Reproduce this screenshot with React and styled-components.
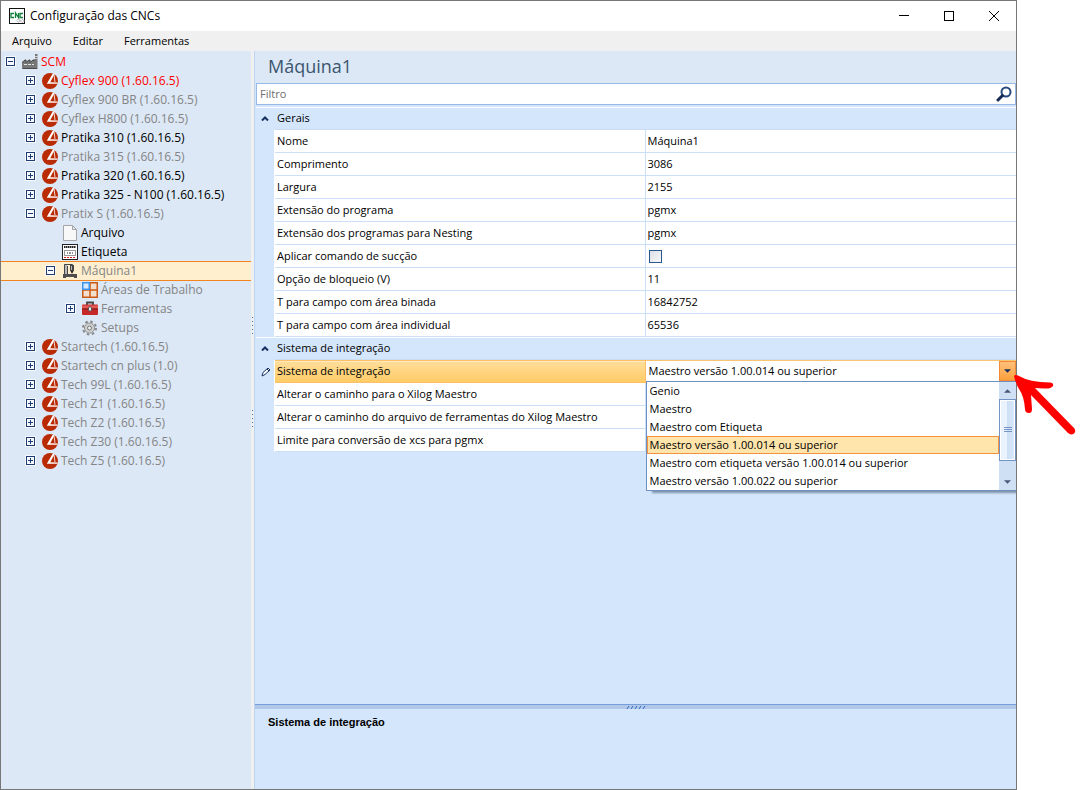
import React from "react";
import styled, { createGlobalStyle, css } from "styled-components";

const GlobalStyle = createGlobalStyle`
  * {
    box-sizing: border-box;
  }

  body {
    margin: 0;
    background: #fff;
    color: #000;
    font-family: "Open Sans", "Noto Sans", sans-serif;
    font-size: 12px;
  }

  button,
  input,
  select {
    margin: 0;
    padding: 0;
    border: 0;
    border-radius: 0;
    background: none;
    font: inherit;
    color: inherit;
  }
`;

const Desktop = styled.div`
  display: flex;
  min-height: 100vh;
  padding-right: 71px;
`;

const Window = styled.main`
  display: flex;
  flex: 1;
  flex-direction: column;
  min-width: 0;
  border: 1px solid #777;
`;

const TitleBar = styled.header`
  display: flex;
  align-items: center;
  height: 30px;
  padding-left: 8px;
`;

const WindowTitle = styled.h1`
  flex: 1;
  margin: 0 0 0 4px;
  font-size: 12px;
  font-weight: 400;
  line-height: 30px;
`;

const WindowButton = styled.button`
  display: flex;
  align-items: center;
  justify-content: center;
  width: 45px;
  height: 30px;
`;

const MenuBar = styled.nav`
  display: flex;
  gap: 21px;
  height: 20px;
  padding-left: 11px;
  background: #f0f0f0;
  font-size: 11px;
  line-height: 20px;
`;

const MenuItem = styled.button`
  line-height: 20px;
`;

const Body = styled.div`
  display: flex;
  flex: 1;
`;

const Sidebar = styled.nav`
  width: 250px;
  background: #dce8f6;
`;

const Tree = styled.ul`
  margin: 0;
  padding: 1px 0 0;
  list-style: none;
`;

const TreeRow = styled.li`
  display: flex;
  align-items: center;
  height: 19px;
  padding-left: ${({ $level }) => 4 + $level * 20}px;
  color: ${({ $color }) => $color || "#858585"};
  white-space: nowrap;

  ${({ $selected }) =>
    $selected &&
    css`
      background: #ffefcf;
      box-shadow: inset 0 1px #f5841f, 0 1px #f5841f;
    `}
`;

const Toggle = styled.button`
  display: flex;
  width: 11px;
  height: 11px;
`;

const ToggleSpace = styled.span`
  width: 11px;
`;

const TreeIcon = styled.span`
  display: flex;
  width: 16px;
  height: 16px;
  margin: 0 3px 0 6px;
`;

const SideSplitter = styled.div`
  display: flex;
  flex-direction: column;
  align-items: center;
  gap: 76px;
  width: 3px;
  padding-top: 266px;
  background: #f0f0f0;
`;

const SideGrip = styled.span`
  width: 1px;
  height: 17px;
  background: repeating-linear-gradient(#3d6fc4 0 1px, transparent 1px 4px);
`;

const Content = styled.section`
  display: flex;
  flex: 1;
  flex-direction: column;
  min-width: 0;
  border-left: 1px solid #bcd5f5;
  background: #d4e6fc;
`;

const ContentTitle = styled.h2`
  height: 32px;
  margin: 0;
  padding-left: 13px;
  background: #dce8f6;
  color: #3b566e;
  font-size: 18px;
  font-weight: 400;
  line-height: 30px;
`;

const FilterBox = styled.div`
  display: flex;
  height: 22px;
  margin: 0 0 2px 1px;
  border: 1px solid #98b8e6;
  background: #fff;
`;

const FilterInput = styled.input`
  flex: 1;
  padding: 0 0 2px 3px;
  font-size: 11px;
  outline: none;

  &::placeholder {
    color: #6d6d6d;
    opacity: 1;
  }
`;

const SearchButton = styled.button`
  display: flex;
  align-items: center;
  justify-content: center;
  width: 22px;
`;

const GridArea = styled.div`
  flex: 1;
  padding-left: 1px;
`;

const PropertyTable = styled.table`
  width: 100%;
  table-layout: fixed;
  border-collapse: separate;
  border-spacing: 0;
  font-size: 11px;
`;

const GutterCol = styled.col`
  width: 19px;
`;

const GroupCell = styled.th`
  height: 23px;
  padding: 0 0 2px 2px;
  border-top: 1px solid #fff;
  border-bottom: 1px solid #c9dcf3;
  font-weight: 400;
  line-height: 18px;
  text-align: left;
`;

const GutterCell = styled.td`
  height: 23px;
  padding: 0 0 ${({ $group }) => ($group ? "2px" : "0")} 5px;
  border-right: 1px solid ${({ $group }) => ($group ? "transparent" : "#fff")};
  border-top: ${({ $group }) => ($group ? "1px solid #fff" : "0")};
  line-height: 0;
`;

const NameCell = styled.th`
  height: 23px;
  padding: 0 0 0 2px;
  border-right: 1px solid #cbdff6;
  border-bottom: 1px solid #cbdff6;
  background: #fff;
  font-weight: 400;
  line-height: 20px;
  text-align: left;
  white-space: nowrap;

  ${({ $active }) =>
    $active &&
    css`
      border-color: #f9c067;
      box-shadow: inset 0 1px #f9c067, inset 0 2px #ffe9bd;
      background: linear-gradient(#ffdf9e, #ffcb65);
    `}
`;

const ValueCell = styled.td`
  position: relative;
  height: 23px;
  padding: ${({ $active }) => ($active ? "0" : "0 0 0 2px")};
  border-bottom: 1px solid #cbdff6;
  background: #fff;
  line-height: 20px;
`;

const CheckBox = styled.input`
  display: block;
  width: 13px;
  height: 13px;
  margin-left: 1px;
  appearance: none;
  border: 1px solid #2a5690;
  background: linear-gradient(135deg, #dcdfe6, #f8f8f8);
`;

const Combo = styled.div`
  display: flex;
  height: 22px;
  border-top: 1px solid #fbc471;
  border-bottom: 1px solid #84a7dc;
  background: #fff;
`;

const ComboSelect = styled.select`
  flex: 1;
  min-width: 0;
  padding-left: 3px;
  appearance: none;
  outline: none;
`;

const ComboButton = styled.button`
  display: flex;
  align-items: center;
  justify-content: center;
  width: 17px;
  border: 1px solid #f58a36;
  background: linear-gradient(#ffc07a, #fba03c);
`;

const Popup = styled.div`
  position: absolute;
  top: 21px;
  right: 0;
  left: 0;
  z-index: 1;
  display: flex;
  border: 1px solid #6f91c2;
  border-right: 0;
  background: #fff;
  box-shadow: 5px 3px 2px -1px #8091a8;
  clip-path: inset(0 0 -5px 0);
`;

const OptionList = styled.ul`
  flex: 1;
  margin: 0;
  padding: 0;
  list-style: none;
`;

const Option = styled.li`
  height: 18px;
  padding-left: 2px;
  border: 1px solid ${({ $current }) => ($current ? "#f5923e" : "transparent")};
  background: ${({ $current }) => ($current ? "#ffe5ab" : "transparent")};
  line-height: 16px;
  white-space: nowrap;
`;

const ScrollBar = styled.div`
  display: flex;
  flex-direction: column;
  width: 17px;
  background: #cfdff4;
`;

const ScrollButton = styled.button`
  display: flex;
  align-items: center;
  justify-content: center;
  height: 17px;
`;

const ScrollThumb = styled.div`
  display: flex;
  align-items: center;
  justify-content: center;
  height: 62px;
  margin-bottom: 12px;
  border: 1px solid #7293c4;
  background: linear-gradient(90deg, #e9f2fd 45%, #cbdef5 45%, #dce9fa);
  box-shadow: inset 0 0 0 1px #fff;
`;

const Pointer = styled.svg`
  position: absolute;
  top: 11px;
  right: -61px;
  z-index: 2;
  pointer-events: none;
`;

const BottomSplitter = styled.div`
  display: flex;
  align-items: center;
  justify-content: center;
  height: 5px;
  border-top: 1px solid #759edb;
  background: #b1c8e9;
`;

const Description = styled.div`
  height: 80px;
  padding: 4px 13px;
  font-family: "Liberation Sans", sans-serif;
  font-size: 11px;
  font-weight: 700;
  line-height: 18px;
`;

function CncIcon() {
  return (
    <svg width="17" height="17" viewBox="0 0 17 17" aria-hidden="true">
      <rect x=".5" y=".5" width="15" height="15" fill="#fff" stroke="#111" />
      <g fill="none" stroke="#15803d" strokeWidth="1.300">
        <path d="M5 5.500H2v4h3" />
        <path d="M6.500 10V5L9.500 9.500V5" />
        <path d="M14 5.500h-3v4h3" />
      </g>
      <g fill="none" stroke="#999">
        <circle cx="9.500" cy="12.500" r="1.500" strokeDasharray="1 .5" />
        <circle cx="13.500" cy="13" r="1.500" strokeDasharray="1 .5" />
      </g>
    </svg>
  );
}

function ToggleIcon({ open }) {
  return (
    <svg width="11" height="11" viewBox="0 0 11 11" aria-hidden="true">
      <rect x="0" y="0" width="11" height="11" rx="1" fill="#fff" opacity=".8" />
      <rect x="1.500" y="1.500" width="8" height="8" fill="#f7faff" stroke="#1f3d72" />
      <path d={open ? "M3 5.500h5" : "M3 5.500h5M5.500 3v5"} stroke="#1f3d72" />
    </svg>
  );
}

const icons = {
  factory: (
    <>
      <path d="M0 15V8.500L3 6h1v2.500L7 6h1v2.500L11 6h2V0h2.500v15z" fill="#777" />
      <path d="M0 8.500L3 6h1v2.500L7 6h1v2.500L11 6h2" fill="none" stroke="#444" />
      <path d="M2 10.500h3M6 10.500h3M10 10.500h2" stroke="#e4e4e4" />
      <path d="M1 14.500h14" stroke="#4a4a4a" />
      <path d="M13 2.500h3M13 4.500h3" stroke="#ccc" />
    </>
  ),
  scm: (
    <>
      <circle cx="8" cy="8" r="8" fill="#b92b05" />
      <path d="M12.500 0L10.500 1 4.800 10.800H15.500V9.500L8.200 9.200 11.600 3z" fill="#fff" />
      <path d="M12 1.500l1 7.500" fill="none" stroke="#fff" strokeWidth=".8" />
    </>
  ),
  file: (
    <path d="M1.500.5h9l4 4v11h-13zM10.500.5v4h4" fill="#f8f8f8" stroke="#a5a5a5" />
  ),
  label: (
    <>
      <rect x=".5" y=".5" width="15" height="15" fill="#fff" stroke="#222" />
      <path d="M2 3h12" stroke="#222" strokeWidth="2" strokeDasharray="1 .5 2 .5" />
      <rect x="2.500" y="6.500" width="11" height="5" fill="#fff" stroke="#333" strokeDasharray="1 1" />
      <path d="M5 9h1M7 9h2M10 9h1" stroke="#222" />
      <path d="M2 13.500h12" stroke="#c22" strokeDasharray="2 1" />
    </>
  ),
  machine: (
    <>
      <path d="M2 11V1h3v10z" fill="#b8b8b8" />
      <path d="M2.500 11V1.500h8V8M5.500 11V3" fill="none" stroke="#454545" />
      <path d="M8 2h4v6H8z" fill="#454545" />
      <path d="M9 3h1v4H9z" fill="#b8b8b8" />
      <path d="M1 11h14v4h-3v-1H4v1H1z" fill="#4e4e4e" />
      <path d="M8.500 8L10 11l1.500-3z" fill="#222" />
    </>
  ),
  areas: (
    <>
      <rect x=".75" y=".75" width="14.500" height="14.500" fill="#f7ddcb" stroke="#c85a16" strokeWidth="1.500" />
      <path d="M8 1v14M1 8h14" stroke="#c85a16" strokeWidth="1.500" />
      <rect x=".75" y=".75" width="6.500" height="6.500" fill="#d8e9fb" stroke="#3e95ee" strokeWidth="1.500" />
    </>
  ),
  toolbox: (
    <>
      <path d="M5 4V1.500h6V4" fill="none" stroke="#454545" strokeWidth="1.800" />
      <rect x="0" y="3.500" width="16" height="10.500" rx="1" fill="#c62828" />
      <path d="M0 4.500h16v3H0z" fill="#e35a55" />
      <path d="M0 8h16" stroke="#7d1414" />
      <rect x="6.500" y="6" width="3" height="4" rx="1" fill="#eee" stroke="#555" />
    </>
  ),
  gear: (
    <>
      <circle cx="7.500" cy="8" r="6.500" fill="none" stroke="#888" strokeWidth="2" strokeDasharray="2.500 2.600" />
      <circle cx="7.500" cy="8" r="5" fill="#d0d0d0" stroke="#909090" />
      <circle cx="7.500" cy="8" r="2" fill="#eee" stroke="#777" />
    </>
  )
};

const treeItems = [
  { name: "SCM", level: 0, icon: "factory", color: "#f00", open: true },
  { name: "Cyflex 900 (1.60.16.5)", level: 1, icon: "scm", color: "#f00", open: false },
  { name: "Cyflex 900 BR (1.60.16.5)", level: 1, icon: "scm", open: false },
  { name: "Cyflex H800 (1.60.16.5)", level: 1, icon: "scm", open: false },
  { name: "Pratika 310 (1.60.16.5)", level: 1, icon: "scm", color: "#000", open: false },
  { name: "Pratika 315 (1.60.16.5)", level: 1, icon: "scm", open: false },
  { name: "Pratika 320 (1.60.16.5)", level: 1, icon: "scm", color: "#000", open: false },
  { name: "Pratika 325 - N100 (1.60.16.5)", level: 1, icon: "scm", color: "#000", open: false },
  { name: "Pratix S (1.60.16.5)", level: 1, icon: "scm", open: true },
  { name: "Arquivo", level: 2, icon: "file", color: "#000" },
  { name: "Etiqueta", level: 2, icon: "label", color: "#000" },
  { name: "Máquina1", level: 2, icon: "machine", open: true, selected: true },
  { name: "Áreas de Trabalho", level: 3, icon: "areas" },
  { name: "Ferramentas", level: 3, icon: "toolbox", open: false },
  { name: "Setups", level: 3, icon: "gear" },
  { name: "Startech (1.60.16.5)", level: 1, icon: "scm", open: false },
  { name: "Startech cn plus (1.0)", level: 1, icon: "scm", open: false },
  { name: "Tech 99L (1.60.16.5)", level: 1, icon: "scm", open: false },
  { name: "Tech Z1 (1.60.16.5)", level: 1, icon: "scm", open: false },
  { name: "Tech Z2 (1.60.16.5)", level: 1, icon: "scm", open: false },
  { name: "Tech Z30 (1.60.16.5)", level: 1, icon: "scm", open: false },
  { name: "Tech Z5 (1.60.16.5)", level: 1, icon: "scm", open: false }
];

const groups = [
  {
    title: "Gerais",
    rows: [
      { name: "Nome", value: "Máquina1" },
      { name: "Comprimento", value: "3086" },
      { name: "Largura", value: "2155" },
      { name: "Extensão do programa", value: "pgmx" },
      { name: "Extensão dos programas para Nesting", value: "pgmx" },
      { name: "Aplicar comando de sucção", type: "check" },
      { name: "Opção de bloqueio (V)", value: "11" },
      { name: "T para campo com área binada", value: "16842752" },
      { name: "T para campo com área individual", value: "65536" }
    ]
  },
  {
    title: "Sistema de integração",
    rows: [
      { name: "Sistema de integração", type: "combo" },
      { name: "Alterar o caminho para o Xilog Maestro" },
      { name: "Alterar o caminho do arquivo de ferramentas do Xilog Maestro" },
      { name: "Limite para conversão de xcs para pgmx" }
    ]
  }
];

const systems = [
  "Genio",
  "Maestro",
  "Maestro com Etiqueta",
  "Maestro versão 1.00.014 ou superior",
  "Maestro com etiqueta versão 1.00.014 ou superior",
  "Maestro versão 1.00.022 ou superior"
];

function Triangle({ up, color }) {
  return (
    <svg width="7" height="4" viewBox="0 0 8 4" aria-hidden="true">
      <path d={up ? "M0 4l4-4 4 4z" : "M0 0h8L4 4z"} fill={color} />
    </svg>
  );
}

function SystemField() {
  const [system, setSystem] = React.useState(systems[3]);

  return (
    <>
      <Combo>
        <ComboSelect
          aria-label="Sistema de integração"
          value={system}
          onChange={event => setSystem(event.target.value)}
        >
          {systems.map(item => (
            <option key={item}>{item}</option>
          ))}
        </ComboSelect>
        <ComboButton aria-label="Abrir lista">
          <Triangle color="#17305f" />
        </ComboButton>
      </Combo>
      <Popup>
        <OptionList role="listbox" aria-label="Sistema de integração">
          {systems.map(item => (
            <Option
              key={item}
              role="option"
              aria-selected={item === system}
              $current={item === system}
              onClick={() => setSystem(item)}
            >
              {item}
            </Option>
          ))}
        </OptionList>
        <ScrollBar>
          <ScrollButton aria-label="Rolar para cima">
            <Triangle up color="#48597a" />
          </ScrollButton>
          <ScrollThumb>
            <svg width="8" height="6" aria-hidden="true">
              <path d="M0 .5h8M0 2.500h8M0 4.500h8" stroke="#7595c8" />
            </svg>
          </ScrollThumb>
          <ScrollButton aria-label="Rolar para baixo">
            <Triangle color="#48597a" />
          </ScrollButton>
        </ScrollBar>
      </Popup>
      <Pointer width="64" height="68" viewBox="0 0 64 68" aria-hidden="true">
        <path
          d="M1 5Q2 3 6 5Q16 11 37 11.500Q41 12 40 15Q38 18 31 17.500L22 17L61 57Q63.500 60 61 62.500Q58 64.500 55 62L18 24L19 38Q19 42 16 42Q12 42 12 38Q11 25 6 18Q2 11 1 5Z"
          fill="#fe0000"
        />
      </Pointer>
    </>
  );
}

function PropertyRow({ row }) {
  const active = row.type === "combo";
  return (
    <tr>
      <GutterCell>
        {active && (
          <svg width="10" height="10" viewBox="0 0 10 10" aria-hidden="true">
            <path d="M1 9l1-3.500L7 1l2 2-5 4.500z" fill="#fff" stroke="#17305f" />
            <path d="M6 2l2 2" stroke="#17305f" />
          </svg>
        )}
      </GutterCell>
      <NameCell scope="row" $active={active}>
        {row.name}
      </NameCell>
      <ValueCell $active={active}>
        {active && <SystemField />}
        {row.type === "check" && <CheckBox type="checkbox" aria-label={row.name} />}
        {row.value}
      </ValueCell>
    </tr>
  );
}

function App() {
  return (
    <>
      <GlobalStyle />
      <Desktop>
        <Window>
          <TitleBar>
            <CncIcon />
            <WindowTitle>Configuração das CNCs</WindowTitle>
            <WindowButton aria-label="Minimizar">
              <svg width="10" height="10">
                <path d="M0 4.500h10" stroke="#000" />
              </svg>
            </WindowButton>
            <WindowButton aria-label="Maximizar">
              <svg width="10" height="10">
                <rect x=".5" y=".5" width="9" height="9" fill="none" stroke="#000" />
              </svg>
            </WindowButton>
            <WindowButton aria-label="Fechar">
              <svg width="10" height="10">
                <path d="M0 0l10 10M10 0L0 10" stroke="#000" />
              </svg>
            </WindowButton>
          </TitleBar>
          <MenuBar>
            <MenuItem>Arquivo</MenuItem>
            <MenuItem>Editar</MenuItem>
            <MenuItem>Ferramentas</MenuItem>
          </MenuBar>
          <Body>
            <Sidebar>
              <Tree>
                {treeItems.map(item => (
                  <TreeRow
                    key={item.name}
                    $level={item.level}
                    $color={item.color}
                    $selected={item.selected}
                  >
                    {item.open === undefined ? (
                      <ToggleSpace />
                    ) : (
                      <Toggle aria-label={item.name} aria-expanded={item.open}>
                        <ToggleIcon open={item.open} />
                      </Toggle>
                    )}
                    <TreeIcon>
                      <svg width="16" height="16" viewBox="0 0 16 16" aria-hidden="true">
                        {icons[item.icon]}
                      </svg>
                    </TreeIcon>
                    {item.name}
                  </TreeRow>
                ))}
              </Tree>
            </Sidebar>
            <SideSplitter>
              <SideGrip />
              <SideGrip />
            </SideSplitter>
            <Content>
              <ContentTitle>Máquina1</ContentTitle>
              <FilterBox>
                <FilterInput aria-label="Filtro" placeholder="Filtro" />
                <SearchButton aria-label="Pesquisar">
                  <svg width="16" height="16" viewBox="0 0 16 16">
                    <circle cx="10" cy="6" r="4.500" fill="none" stroke="#27497e" strokeWidth="2" />
                    <path d="M6.500 9.500L2 14" stroke="#142a54" strokeWidth="3" strokeLinecap="round" />
                  </svg>
                </SearchButton>
              </FilterBox>
              <GridArea>
                <PropertyTable>
                  <colgroup>
                    <GutterCol />
                    <col />
                    <col />
                  </colgroup>
                  {groups.map(group => (
                    <tbody key={group.title}>
                      <tr>
                        <GutterCell $group>
                          <svg width="8" height="5" viewBox="0 0 8 5" aria-hidden="true">
                            <path d="M1 4.500l3-3 3 3" fill="none" stroke="#17305f" strokeWidth="2" />
                          </svg>
                        </GutterCell>
                        <GroupCell colSpan="2" scope="rowgroup">
                          {group.title}
                        </GroupCell>
                      </tr>
                      {group.rows.map(row => (
                        <PropertyRow key={row.name} row={row} />
                      ))}
                    </tbody>
                  ))}
                </PropertyTable>
              </GridArea>
              <BottomSplitter>
                <svg width="20" height="3" aria-hidden="true">
                  <path d="M1 3l2-3M5 3l2-3M9 3l2-3M13 3l2-3M17 3l2-3" stroke="#2f68c4" />
                </svg>
              </BottomSplitter>
              <Description>Sistema de integração</Description>
            </Content>
          </Body>
        </Window>
      </Desktop>
    </>
  );
}

export default App;
